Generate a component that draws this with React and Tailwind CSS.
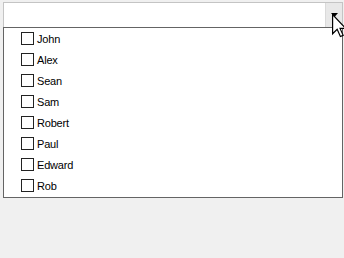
import React from 'react';

const names = ['John', 'Alex', 'Sean', 'Sam', 'Robert', 'Paul', 'Edward', 'Rob'];

function Cursor() {
  return (
    <svg className="absolute left-[332px] top-[14px]" width="15" height="24" viewBox="0 0 12.5 20">
      <path
        d="M0.5 0.5 L0.5 16.5 L4.3 12.8 L7 18.8 L9.3 17.8 L6.7 12 L11.5 12 Z"
        fill="#fff"
        stroke="#000"
        strokeWidth="1"
        strokeLinejoin="miter"
      />
    </svg>
  );
}

export default function App() {
  return (
    <div className="relative h-[258px] w-[344px] overflow-hidden bg-[#f0f0f0] pl-[3px] pt-[2px] font-['Liberation_Sans',Arial,sans-serif] text-[11px] text-black">
      <div className="flex h-[25px] w-[340px] border border-b-0 border-[#c4c4c4] bg-white">
        <div className="flex-1" />
        <div className="flex w-[17px] items-center justify-center border-l border-[#dadada] bg-[#e8e8e8]">
          <svg width="7" height="4" viewBox="0 0 7 4">
            <path d="M0 0 L7 0 L3.5 4 Z" fill="#000" />
          </svg>
        </div>
      </div>
      <div className="flex w-[340px] flex-col border border-[#646464] bg-white pb-[1px]">
        {names.map((n) => (
          <div key={n} className="flex h-[21px] items-center pl-[17px]">
            <span className="h-[13px] w-[13px] border border-[#222]" />
            <span className="ml-[3px] mt-[2px] leading-none tracking-[-0.2px]">{n}</span>
          </div>
        ))}
      </div>
      <Cursor />
    </div>
  );
}
